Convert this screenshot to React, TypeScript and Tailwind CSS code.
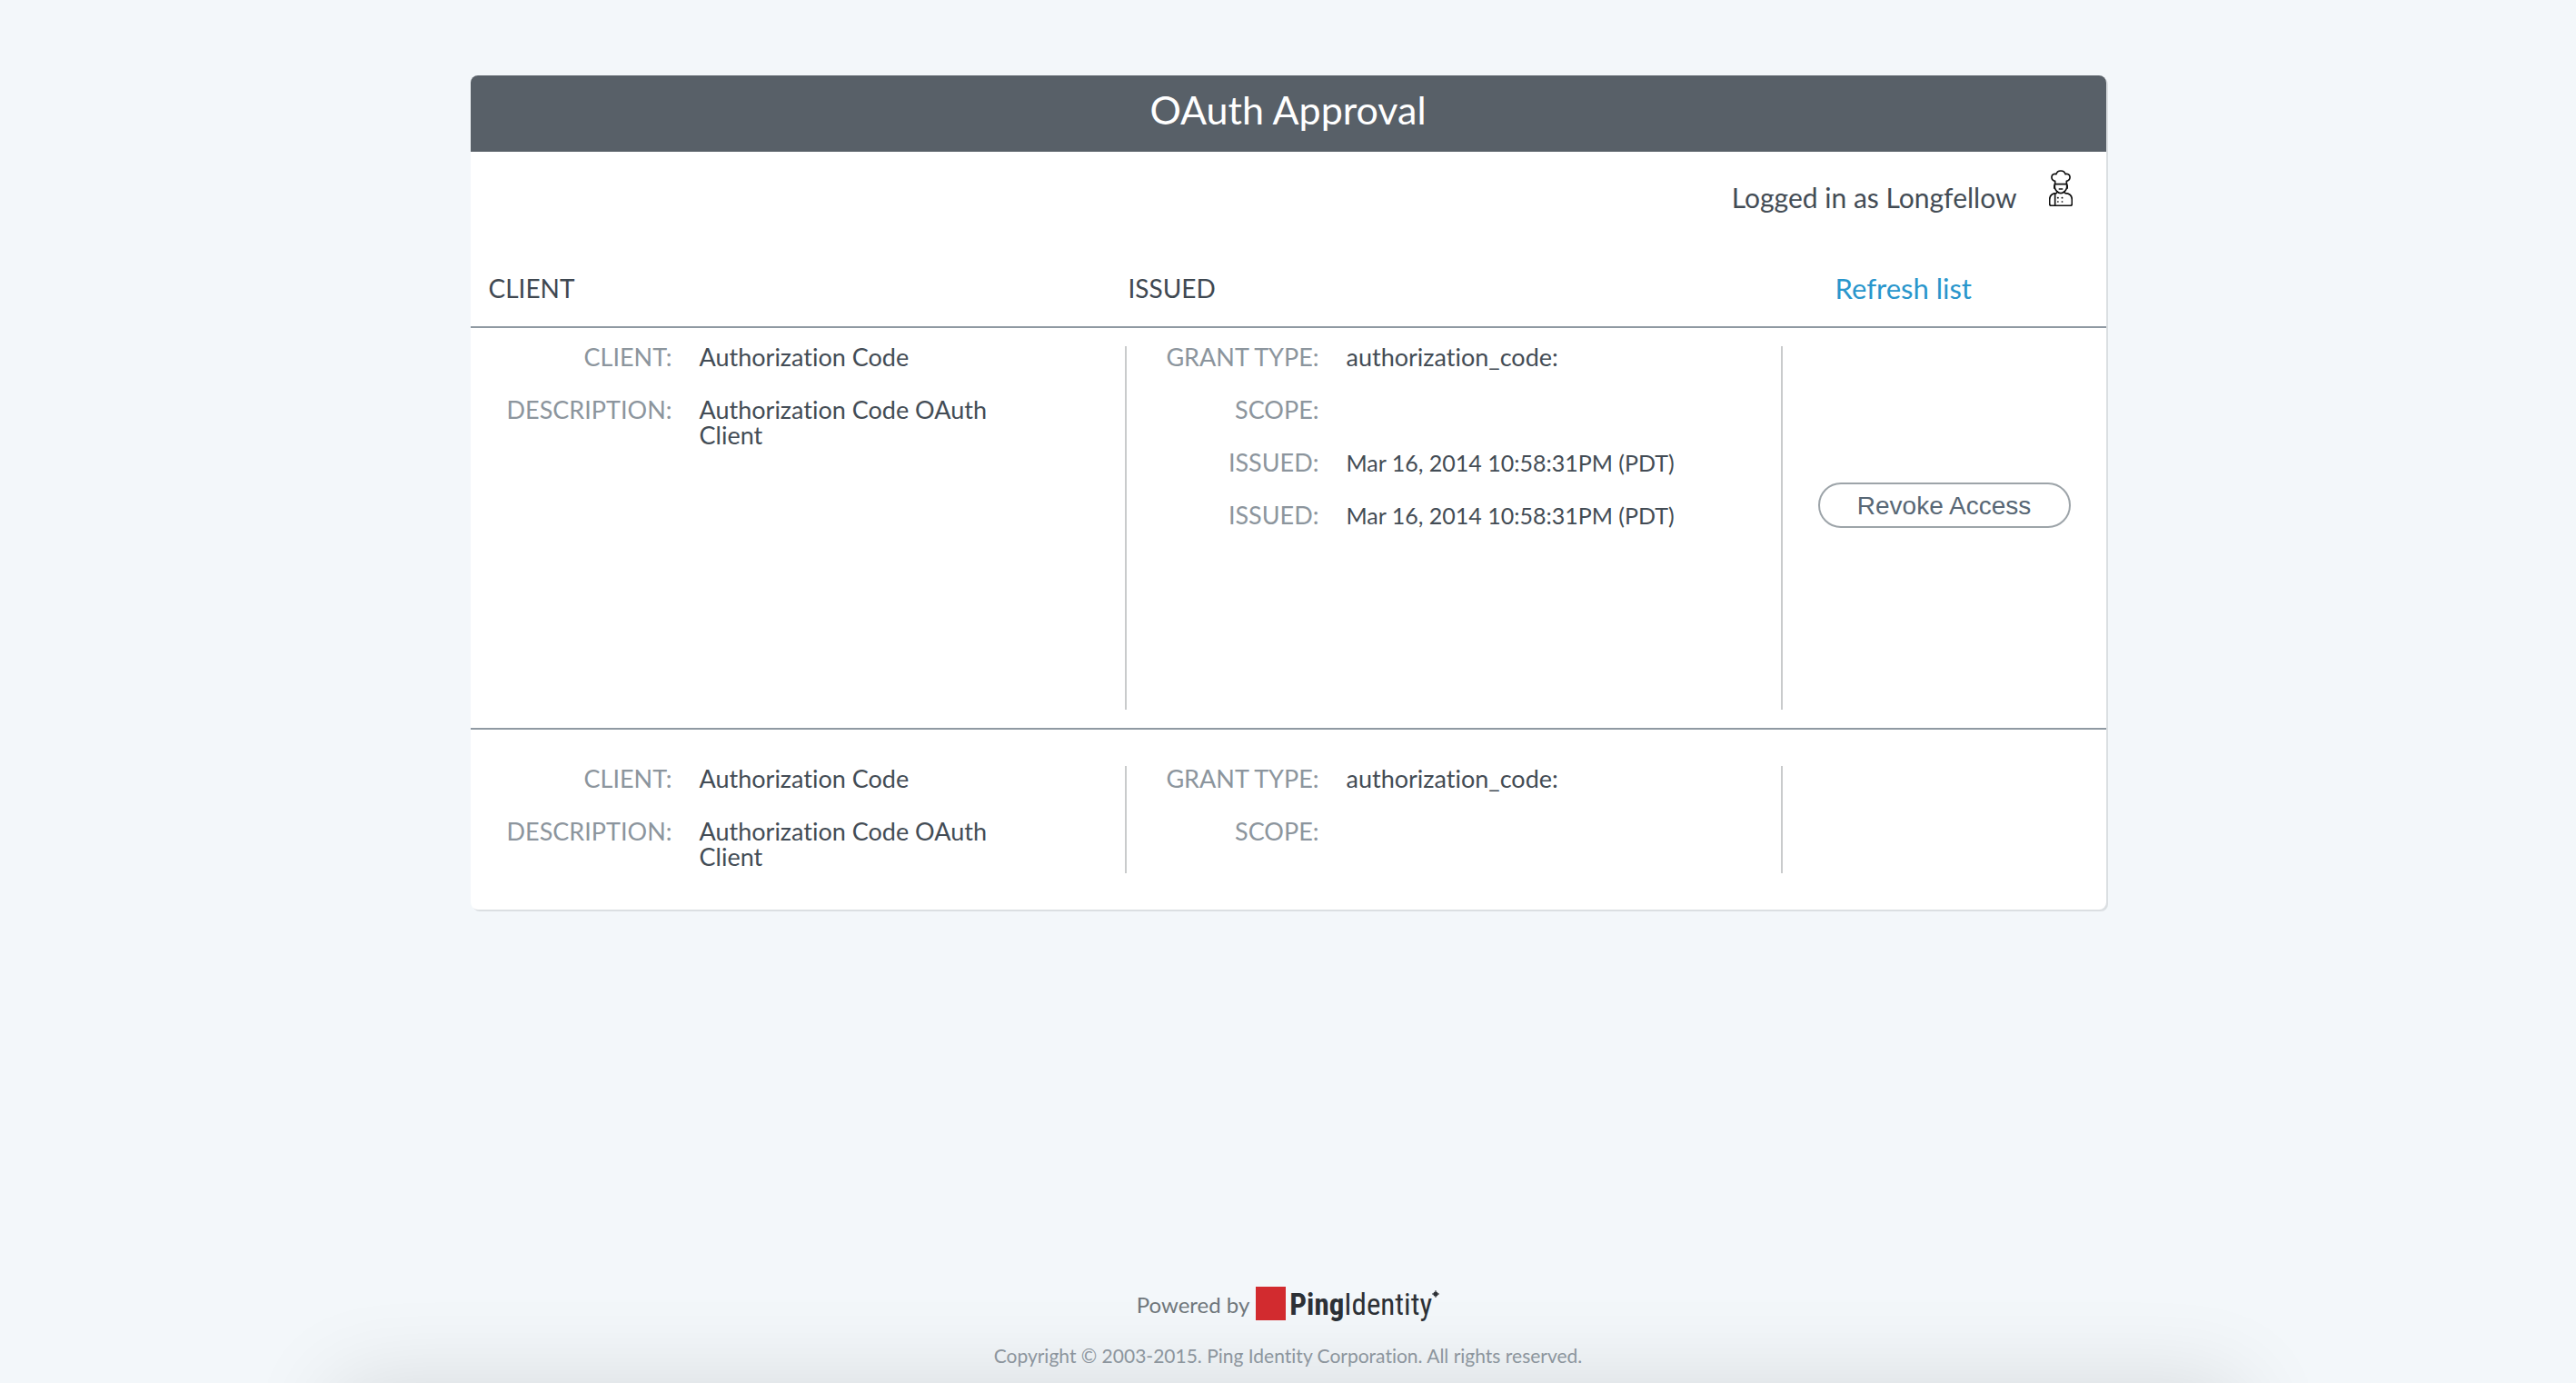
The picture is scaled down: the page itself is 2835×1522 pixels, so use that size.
type Entry = { label: string; value: string; small?: boolean };

type Grant = {
  id: string;
  client: Entry[];
  issued: Entry[];
  revocable: boolean;
};

const client: Entry[] = [
  { label: "CLIENT:", value: "Authorization Code" },
  { label: "DESCRIPTION:", value: "Authorization Code OAuth Client" },
];

const grants: Grant[] = [
  {
    id: "first",
    client,
    issued: [
      { label: "GRANT TYPE:", value: "authorization_code:" },
      { label: "SCOPE:", value: "" },
      { label: "ISSUED:", value: "Mar 16, 2014 10:58:31PM (PDT)", small: true },
      { label: "ISSUED:", value: "Mar 16, 2014 10:58:31PM (PDT)", small: true },
    ],
    revocable: true,
  },
  {
    id: "second",
    client,
    issued: [
      { label: "GRANT TYPE:", value: "authorization_code:" },
      { label: "SCOPE:", value: "" },
    ],
    revocable: false,
  },
];

function ChefIcon() {
  return (
    <svg
      className="h-10 w-[26px] shrink-0"
      viewBox="0 0 78 120"
      fill="none"
      stroke="#111111"
      strokeWidth="5"
      strokeLinecap="round"
      strokeLinejoin="round"
      role="img"
      aria-label="User avatar"
    >
      <path d="M20 47V37C12 35 8 29 9 22C10 15 18 11 24 14C26 6 32 3 39 3C46 3 52 6 54 14C60 11 68 15 69 22C70 29 66 35 58 37V47Z" />
      <path d="M19 47V58C21 67 29 77 39 77C49 77 57 67 59 58V47" />
      <path d="M18 52V60M60 52V60" strokeWidth="6" />
      <path d="M34 63H44" strokeWidth="5" />
      <path d="M28 72L24 77C10 78 2 85 2 98V112Q2 118 8 118H70Q76 118 76 112V98C76 85 68 78 54 77L50 72" />
      <path d="M20 78V118" />
      <path d="M29 92H30M43 92H44M29 105H30M43 105H44" strokeWidth="5" />
    </svg>
  );
}

function EntryList({ entries, columns }: { entries: Entry[]; columns: string }) {
  return (
    <dl className={`grid gap-x-[30px] gap-y-[30px] text-[27px] leading-7 ${columns}`}>
      {entries.map((entry, i) => (
        <div key={i} className="contents">
          <dt className="text-right text-[#8c959d]">{entry.label}</dt>
          <dd className={entry.small ? "text-[25px] whitespace-nowrap text-[#434c55]" : "max-w-[340px] text-[#434c55]"}>
            {entry.value}
          </dd>
        </div>
      ))}
    </dl>
  );
}

function GrantRow({ grant }: { grant: Grant }) {
  const divider = grant.revocable ? "my-5 bg-[#c9cbcc]" : "my-10 bg-[#c9cbcc]";
  const top = grant.revocable ? "pt-[18px]" : "pt-10";
  return (
    <section
      className={`grid grid-cols-[720fr_2px_720fr_2px_356fr] ${
        grant.revocable ? "min-h-[440px]" : "min-h-[198px]"
      }`}
    >
      <div className={top}>
        <EntryList entries={grant.client} columns="grid-cols-[222px_1fr]" />
      </div>
      <div className={divider} />
      <div className={top}>
        <EntryList entries={grant.issued} columns="grid-cols-[212px_1fr]" />
      </div>
      <div className={divider} />
      <div className="px-[39px] pt-[170px] empty:pt-0">
        {grant.revocable && (
          <button
            type="button"
            className="h-[50px] w-full rounded-full border-2 border-[#9da4a9] bg-white pt-0.5 font-['Liberation_Sans',sans-serif] text-[28px] leading-none text-[#586775]"
          >
            Revoke Access
          </button>
        )}
      </div>
    </section>
  );
}

export default function App() {
  return (
    <div className="relative flex min-h-screen flex-col items-center overflow-hidden bg-[#f3f7fa] font-['Lato',sans-serif] [font-variant-ligatures:none]">
      <div className="absolute inset-x-[13%] top-full h-40 shadow-[0_0_100px_rgba(0,0,0,0.12)]" />

      <main className="mt-[83px] w-full max-w-[1800px] overflow-hidden rounded-lg bg-white shadow-[2px_2px_0_#dbdfe2]">
        <h1 className="bg-[#586068] pb-2 text-center text-[43px] leading-[76px] text-white">OAuth Approval</h1>

        <div className="flex items-start justify-end gap-[35px] pt-5 pr-[37px]">
          <p className="pt-2.5 text-[30px] leading-10 text-[#434c55]">Logged in as Longfellow</p>
          <ChefIcon />
        </div>

        <div className="grid grid-cols-[720fr_724fr_356fr] border-b-2 border-[#8f99a2] pt-[60px] pb-[22px] leading-10 text-[#3f4851]">
          <h2 className="pl-5 text-[28px]">CLIENT</h2>
          <h2 className="pl-1 text-[28px]">ISSUED</h2>
          <a href="#refresh" className="pl-[58px] text-[31px] text-[#2996cc]">
            Refresh list
          </a>
        </div>

        <GrantRow grant={grants[0]} />
        <hr className="border-t-2 border-[#8f99a2]" />
        <GrantRow grant={grants[1]} />
      </main>

      <footer className="relative mt-auto flex flex-col items-center pb-4">
        <div className="mb-[22px] flex items-start leading-10">
          <span className="text-2xl leading-10 text-[#6f767b]">Powered by</span>
          <span className="mr-1 ml-[7px] h-[37px] w-[33px] bg-[#d22b2f]" />
          <span className="font-['Roboto_Condensed',sans-serif] text-[33px] leading-10 text-[#2c3035]">
            <b>Ping</b>Identity
          </span>
          <svg className="mt-1 h-2 w-2" viewBox="0 0 8 8" aria-hidden="true">
            <path d="M4 0V8M0 4H8" stroke="#2c3035" strokeWidth="1" />
            <circle cx="4" cy="4" r="2.6" fill="#2c3035" />
          </svg>
        </div>
        <p className="text-[21px] leading-7 text-[#8c959d]">
          Copyright © 2003-2015. Ping Identity Corporation. All rights reserved.
        </p>
      </footer>
    </div>
  );
}
